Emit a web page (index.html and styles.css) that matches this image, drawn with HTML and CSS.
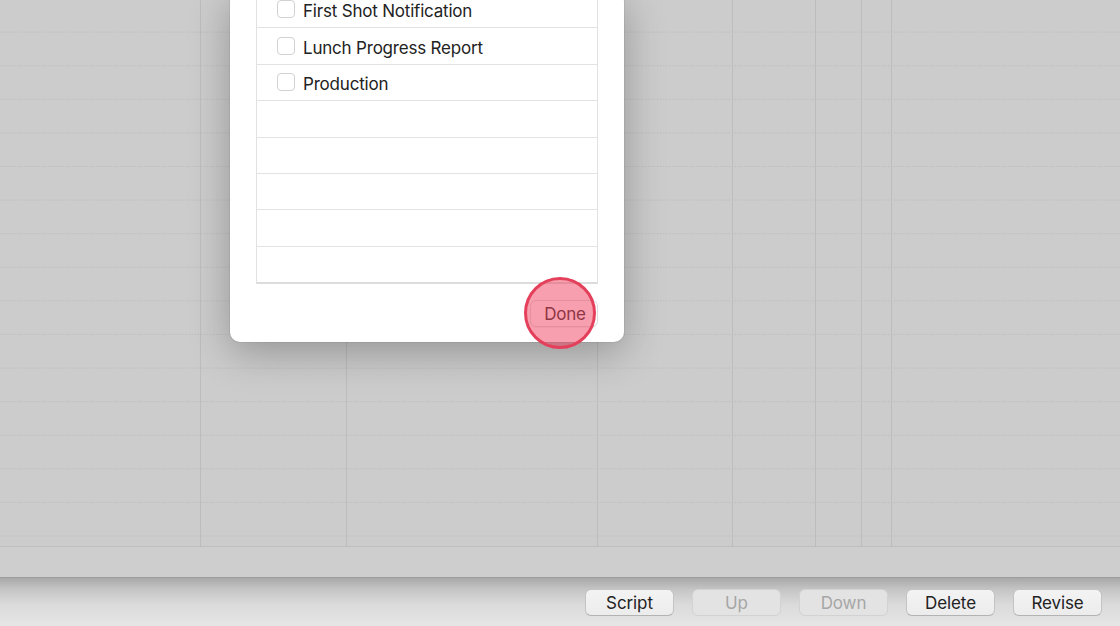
FILE: index.html
```html
<!DOCTYPE html>
<html lang="en">

<head>
    <meta charset="UTF-8">
    <title>Call Sheet - Reports</title>
    <link rel="stylesheet" href="styles.css">
</head>

<body>
    <div class="window">
        <div class="sheet-grid">
            <div class="col" style="width: 201px"></div>
            <div class="col" style="width: 146px"></div>
            <div class="col" style="width: 251px"></div>
            <div class="col" style="width: 135px"></div>
            <div class="col" style="width: 83px"></div>
            <div class="col" style="width: 46px"></div>
            <div class="col" style="width: 30px"></div>
            <div class="col col-last"></div>
        </div>

        <div class="status-bar"></div>

        <div class="toolbar">
            <button class="tool-btn">Script</button>
            <button class="tool-btn" disabled>Up</button>
            <button class="tool-btn" disabled>Down</button>
            <button class="tool-btn">Delete</button>
            <button class="tool-btn">Revise</button>
            <button class="tool-btn" aria-label="More"></button>
        </div>

        <!-- report picker sheet -->
        <div class="dialog">
            <ul class="report-list">
                <li><span class="check"></span>First Shot Notification</li>
                <li><span class="check"></span>Lunch Progress Report</li>
                <li><span class="check"></span>Production</li>
                <li></li>
                <li></li>
                <li></li>
                <li></li>
                <li></li>
            </ul>
            <div class="dialog-footer">
                <button class="done-btn">Done<span class="click-mark"></span></button>
            </div>
        </div>
    </div>
</body>

</html>
```

FILE: styles.css
```css
body {
    margin: 0;
    font-family: "Inter", "Liberation Sans", sans-serif;
    color: #222;
    overflow: hidden;
}

.window {
    position: relative;
    width: 1120px;
    height: 626px;
    display: flex;
    flex-direction: column;
    background-color: #cccccc;
    overflow: hidden;
}

.sheet-grid {
    display: flex;
    height: 546px;
    border-bottom: 1px solid #bebebe;
    background-image:
        linear-gradient(to bottom, #cccccc calc(100% - 1px), transparent 1px),
        linear-gradient(to right, #bcbcbc 50%, #c9c9c9 50%);
    background-size: 3px 33.6px;
    background-position: 0 -1px;
}

.col {
    flex-shrink: 0;
    border-right: 1px solid #bdbdbd;
    box-sizing: border-box;
}

.col-last {
    flex: 1;
    border-right: none;
}

.status-bar {
    height: 30px;
    background-color: #cecece;
    border-bottom: 1px solid #9d9d9d;
}

.toolbar {
    flex: 1;
    display: flex;
    gap: 18px;
    padding: 11px 0 0 585px;
    box-sizing: border-box;
    background: linear-gradient(to bottom, #a9a9a9 0px, #c6c6c6 12px, #dadada 26px, #e6e6e6 48px);
}

.tool-btn {
    flex-shrink: 0;
    width: 89px;
    height: 27px;
    padding: 0;
    font-family: inherit;
    font-size: 17px;
    letter-spacing: -0.1px;
    color: #222;
    background: linear-gradient(to bottom, #f3f3f3, #ececec);
    border: 1px solid #c3c3c3;
    border-bottom-color: #b3b3b3;
    border-radius: 6px;
}

.tool-btn:disabled {
    color: #a6a6a6;
    background: #e3e3e3;
    border-color: #d2d2d2;
}

.dialog {
    position: absolute;
    left: 230px;
    top: -8px;
    width: 394px;
    box-sizing: border-box;
    padding: 0 26px;
    background-color: #fff;
    border-radius: 10px;
    box-shadow: 0 10px 40px rgba(0, 0, 0, 0.28), 0 0 0 1px rgba(0, 0, 0, 0.05);
}

.report-list {
    list-style: none;
    margin: -1px 0 0;
    padding: 0;
    border: 1px solid #e2e2e2;
    border-top: none;
    border-bottom: 2px solid #dcdcdc;
}

.report-list li {
    display: flex;
    align-items: center;
    height: 36.4px;
    box-sizing: border-box;
    padding: 4px 0 0 20px;
    font-size: 17px;
    letter-spacing: -0.2px;
    border-top: 1px solid #e3e3e3;
}

.report-list li:first-child {
    border-top: none;
}

.check {
    width: 18px;
    height: 18px;
    box-sizing: border-box;
    margin: -4px 8px 0 0;
    border: 1px solid #d2d2d2;
    border-radius: 4px;
    background-color: #fff;
}

.dialog-footer {
    display: flex;
    justify-content: flex-end;
    padding: 16px 0 15px;
}

.done-btn {
    position: relative;
    width: 68px;
    height: 27px;
    padding: 1px 0 0 2px;
    font-family: inherit;
    font-size: 17px;
    letter-spacing: -0.2px;
    color: #222;
    background-color: #fff;
    border: 1px solid #dcdcdc;
    border-radius: 6px;
    box-shadow: 0 1px 1px rgba(0, 0, 0, 0.06);
}

.click-mark {
    position: absolute;
    left: -7px;
    top: -24px;
    width: 72px;
    height: 72px;
    box-sizing: border-box;
    border: 3px solid #e5405b;
    border-radius: 50%;
    background-color: rgba(240, 70, 100, 0.52);
}
```
